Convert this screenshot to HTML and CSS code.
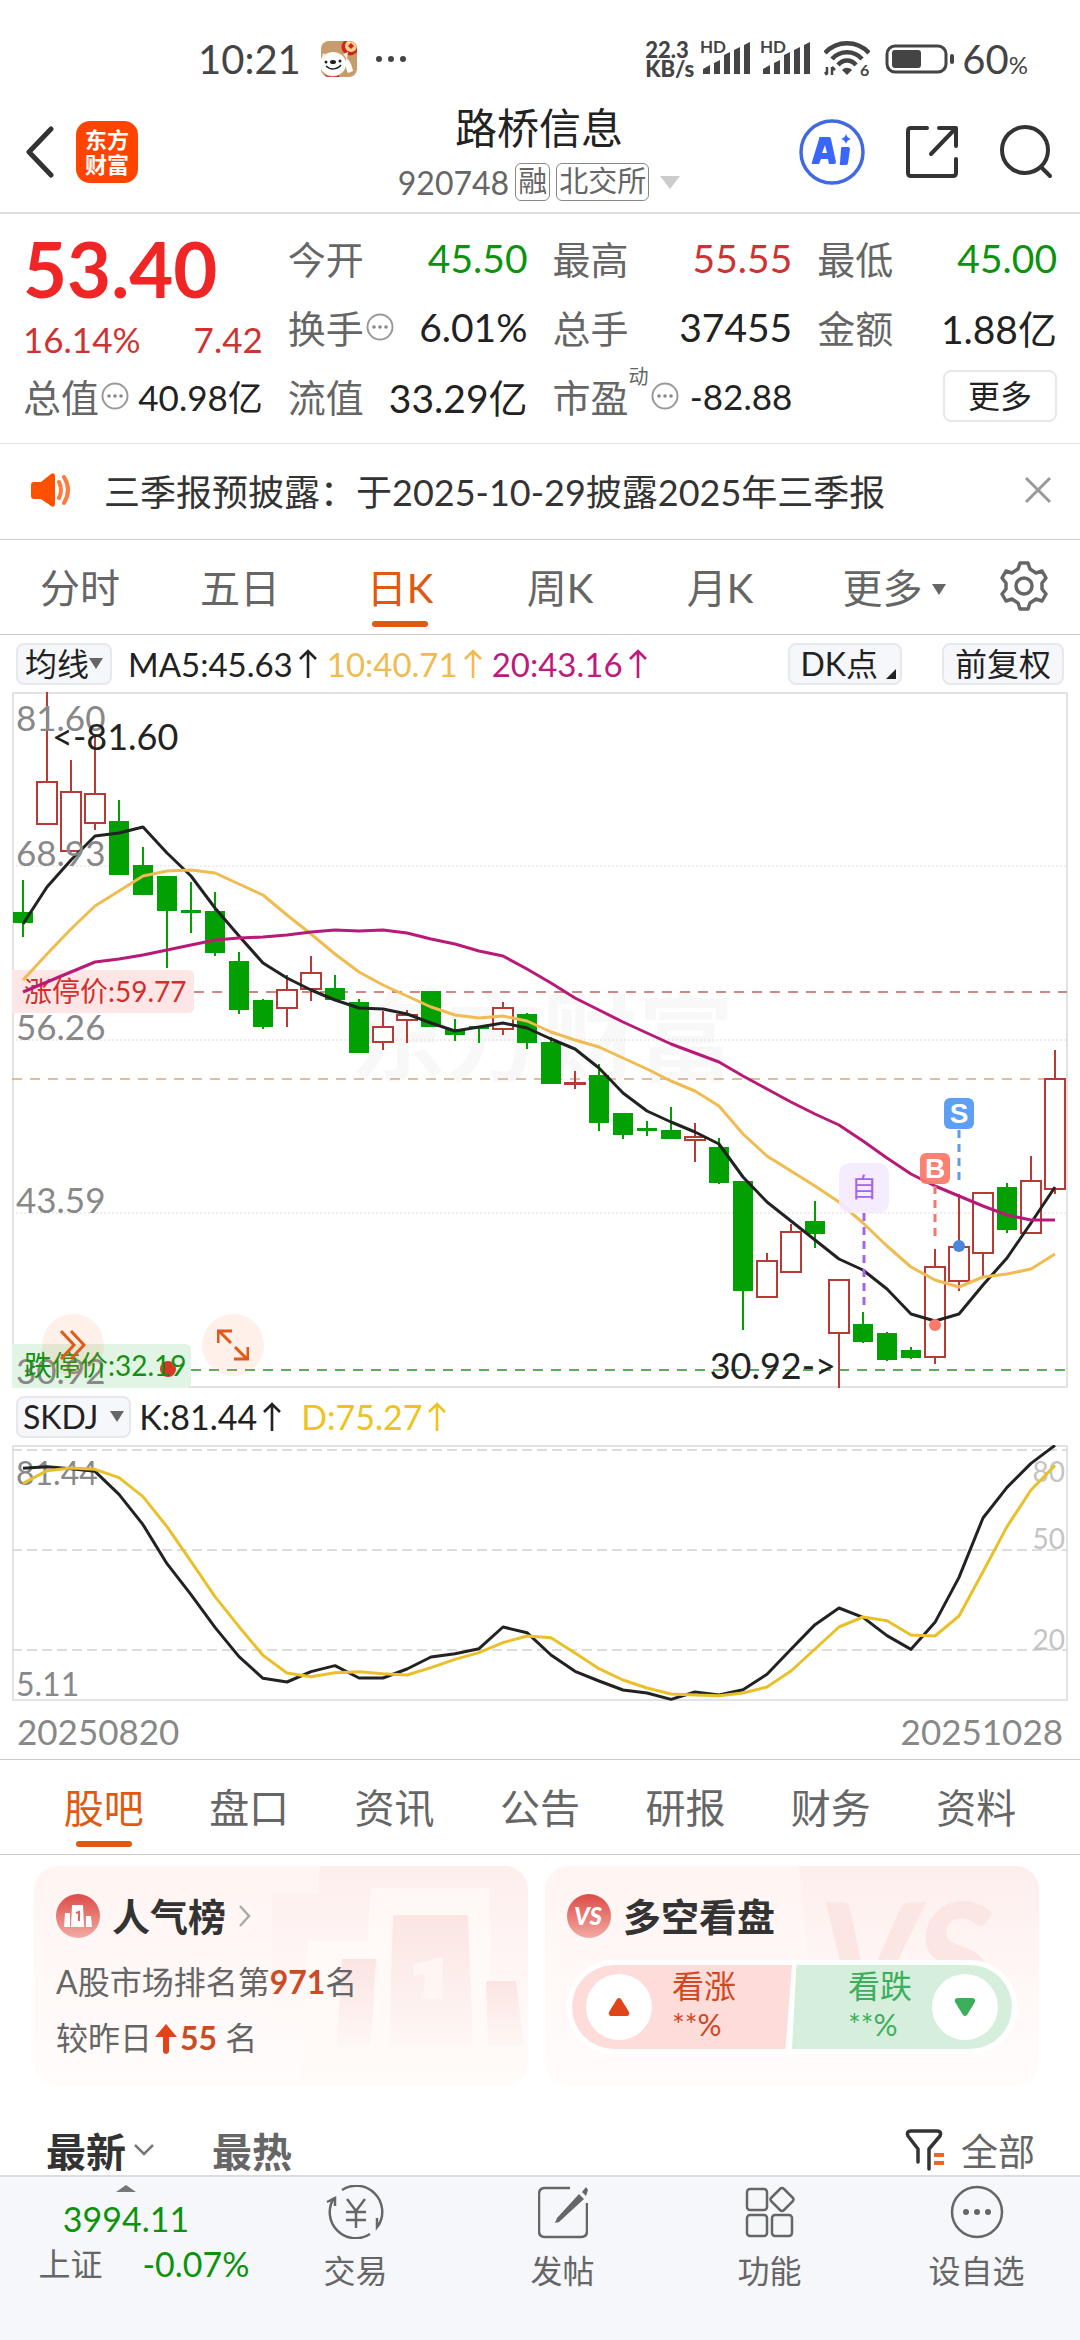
FILE: index.html
```html
<!DOCTYPE html>
<html lang="zh-CN">
<head>
  <meta charset="UTF-8">
  <meta name="viewport" content="width=device-width, initial-scale=1.0">
  <title>路桥信息 920748</title>
  <link rel="stylesheet" href="styles.css">
</head>
<body>
  <!-- Shared icons -->
  <svg class="sprite" aria-hidden="true">
    <symbol id="icon-info" viewBox="0 0 28 28">
      <circle cx="14" cy="14" r="12.5" fill="none" stroke="#999" stroke-width="2"/>
      <g fill="#888"><circle cx="8" cy="14" r="1.8"/><circle cx="14" cy="14" r="1.8"/><circle cx="20" cy="14" r="1.8"/></g>
    </symbol>
    <symbol id="icon-up" viewBox="0 0 18 30">
      <path d="M9 29V2M1 10l8-8 8 8" fill="none" stroke="currentColor" stroke-width="2.6"/>
    </symbol>
    <symbol id="icon-signal" viewBox="0 0 50 36">
      <text x="-1" y="12" class="hd">HD</text>
      <path d="M2 33v-5l7-4v9zM13 33v-11l6-3v14zM23 33V14l6-3v22zM33 33V9l6-3v27zM43 33V4l6-3v32z" fill="#444"/>
    </symbol>
  </svg>

  <div class="app">
    <!-- Status Bar -->
    <div class="status-bar">
      <div class="status-left">
        <span class="clock">10:21</span>
        <svg class="avatar" viewBox="0 0 36 36">
          <defs><clipPath id="avatar-clip"><rect width="36" height="36" rx="8"/></clipPath></defs>
          <g clip-path="url(#avatar-clip)">
            <rect width="36" height="36" fill="#c89b6c"/>
            <circle cx="29" cy="6" r="8.500" fill="#c9281f"/>
            <circle cx="30" cy="5" r="6" fill="#f6cf8a"/>
            <path d="M30 2l3 3-3 3-3-3z" fill="#c9281f"/>
            <ellipse cx="12" cy="23" rx="13" ry="12" fill="#fff"/>
            <path d="M25 17c4 2 6 8 7 13l-5 2c-2-4-3-8-2-15z" fill="#fff"/>
            <path d="M2 12l-2 8 5-6zM22 13l5-2-1 7z" fill="#f4ece2"/>
            <ellipse cx="12" cy="21" rx="3" ry="2" fill="#222"/>
            <circle cx="5" cy="21" r="1.500" fill="#222"/><circle cx="19" cy="20" r="1.500" fill="#222"/>
            <path d="M5 25c4 4 11 4 15-1" fill="none" stroke="#222" stroke-width="1.500"/>
            <path d="M4 34c5 2 10 2 14 0v3H4z" fill="#c9281f"/>
          </g>
        </svg>
        <svg class="dots" viewBox="0 0 32 8" fill="#444"><circle cx="4" cy="4" r="3"/><circle cx="16" cy="4" r="3"/><circle cx="28" cy="4" r="3"/></svg>
      </div>
      <div class="status-right">
        <div class="net-speed">22.3<br>KB/s</div>
        <svg class="signal"><use href="#icon-signal"/></svg>
        <svg class="signal"><use href="#icon-signal"/></svg>
        <svg class="wifi" viewBox="0 0 46 36">
          <g fill="none" stroke="#444" stroke-width="4.500">
            <path d="M1 12C13-1 33-1 45 12"/>
            <path d="M8 18c8-9 22-9 30 0"/>
            <path d="M14 24c5-6 13-6 18 0"/>
          </g>
          <path d="M18 29c3-3 7-3 10 0l-5 5z" fill="#444"/>
          <path d="M3 26v7M3 34l-2-3M8 34v-8M8 26l3 3" fill="none" stroke="#444" stroke-width="2.500"/>
          <text x="36" y="35" class="wifi-gen">6</text>
        </svg>
        <svg class="battery" viewBox="0 0 70 30">
          <rect x="2" y="2" width="59" height="26" rx="8" fill="none" stroke="#444" stroke-width="3"/>
          <rect x="7" y="6" width="29" height="18" rx="3" fill="#444"/>
          <rect x="65" y="10" width="4" height="10" rx="2" fill="#444"/>
        </svg>
        <span class="battery-level">60<small>%</small></span>
      </div>
    </div>

    <!-- Header -->
    <header class="header">
      <div class="header-left">
        <button class="icon-btn" aria-label="返回">
          <svg width="30" height="52" viewBox="0 0 30 52"><path d="M26 3L4 26l22 23" fill="none" stroke="#333" stroke-width="5" stroke-linecap="round" stroke-linejoin="round"/></svg>
        </button>
        <a class="logo" href="#">东方<br>财富</a>
      </div>
      <div class="header-title">
        <h1>路桥信息</h1>
        <div class="header-sub">
          <span>920748</span>
          <span class="tag">融</span>
          <span class="tag">北交所</span>
          <i class="caret caret-light"></i>
        </div>
      </div>
      <div class="header-right">
        <button class="icon-btn" aria-label="AI">
          <svg width="66" height="66" viewBox="0 0 66 66">
            <circle cx="33" cy="33" r="31" fill="none" stroke="#4169e1" stroke-width="3.500"/>
            <path fill="#3a66fb" fill-rule="evenodd" d="M21 18h9q2 0 2 2l5 23q0 2-2 2h-5l-1-5h-7l-2 5h-6q-2 0-1-2l7-23q0-2 1-2zM26 26l-3 8h5zM43 28h6q2 0 2 2l-2 14q0 2-2 2h-5q-2 0-1-2l1-14q0-2 1-2zM47 15q1 4 5 5-4 1-5 5-1-4-5-5 4-1 5-5z"/>
          </svg>
        </button>
        <button class="icon-btn" aria-label="分享">
          <svg width="52" height="52" viewBox="0 0 52 52"><path d="M21 2H5q-3 0-3 3v42q0 3 3 3h42q3 0 3-3V33M33 2h17v18M49 3L25 28" fill="none" stroke="#333" stroke-width="4" stroke-linecap="round" stroke-linejoin="round"/></svg>
        </button>
        <button class="icon-btn" aria-label="搜索">
          <svg width="54" height="54" viewBox="0 0 54 54"><g fill="none" stroke="#333" stroke-width="4" stroke-linecap="round"><circle cx="26" cy="25" r="23"/><path d="M42 42l9 9"/></g></svg>
        </button>
      </div>
    </header>

    <!-- Quote Summary -->
    <section class="quote">
      <div class="quote-main">
        <div class="price">53.40</div>
        <div class="change"><span>16.14%</span><span>7.42</span></div>
      </div>
      <div class="quote-item"><span class="name">今开</span><b class="down">45.50</b></div>
      <div class="quote-item"><span class="name">最高</span><b class="up">55.55</b></div>
      <div class="quote-item"><span class="name">最低</span><b class="down">45.00</b></div>
      <div class="quote-item"><span class="name">换手</span><svg class="info"><use href="#icon-info"/></svg><b>6.01%</b></div>
      <div class="quote-item"><span class="name">总手</span><b>37455</b></div>
      <div class="quote-item"><span class="name">金额</span><b>1.88亿</b></div>
      <div class="quote-item tight"><span class="name">总值</span><svg class="info"><use href="#icon-info"/></svg><b>40.98亿</b></div>
      <div class="quote-item"><span class="name">流值</span><b>33.29亿</b></div>
      <div class="quote-item tight"><span class="name name-sup">市盈<sup>动</sup></span><svg class="info"><use href="#icon-info"/></svg><b>-82.88</b></div>
      <div class="quote-item"><button class="more-btn">更多</button></div>
    </section>

    <!-- Notice -->
    <div class="notice">
      <svg width="42" height="36" viewBox="0 0 42 36">
        <path d="M3 10h7L20 2q4-2 4 2v28q0 4-4 2L10 27H3q-3 0-3-3V13q0-3 3-3z" fill="#ff5000"/>
        <path d="M28 10q4 8 0 16M33 5q8 13 0 26" fill="none" stroke="#ff7a3c" stroke-width="4" stroke-linecap="round"/>
      </svg>
      <a href="#">三季报预披露：于2025-10-29披露2025年三季报</a>
      <button class="icon-btn" aria-label="关闭">
        <svg width="28" height="28" viewBox="0 0 28 28"><path d="M2 2l24 24M26 2L2 26" stroke="#999" stroke-width="3"/></svg>
      </button>
    </div>

    <!-- Period Tabs -->
    <nav class="tabs period-tabs">
      <button>分时</button>
      <button>五日</button>
      <button class="active">日K</button>
      <button>周K</button>
      <button>月K</button>
      <button class="tab-more">更多<i class="caret caret-small"></i></button>
      <button class="gear" aria-label="设置">
        <svg width="48" height="50" viewBox="0 0 48 50"><g fill="none" stroke="#666" stroke-width="3.500" stroke-linejoin="round"><path d="M20 2h8l2 6 6 4 6-2 4 7-4 5v6l4 5-4 7-6-2-6 4-2 6h-8l-2-6-6-4-6 2-4-7 4-5v-6l-4-5 4-7 6 2 6-4z"/><circle cx="24" cy="25" r="8"/></g></svg>
      </button>
    </nav>

    <!-- K-line Chart -->
    <div class="toolbar">
      <button class="chip">均线<i class="caret caret-small"></i></button>
      <div class="legend">
        <span>MA5:45.63<svg class="arrow"><use href="#icon-up"/></svg></span>
        <span class="ma10">10:40.71<svg class="arrow"><use href="#icon-up"/></svg></span>
        <span class="ma20">20:43.16<svg class="arrow"><use href="#icon-up"/></svg></span>
      </div>
      <button class="chip chip-dk">DK点<i class="corner"></i></button>
      <button class="chip chip-right">前复权</button>
    </div>
    <div class="chart">
      <svg id="kline" viewBox="12 692 1056 696">
        <text x="350" y="1073" class="watermark">东方财富</text>
        <rect x="13" y="693" width="1054" height="694" class="chart-frame"/>
        <path d="M12 866H1067M12 1040H1067M12 1213H1067" class="grid-dotted"/>
        <path d="M12 970H188q6 0 6 6v31q0 6-6 6H12z" fill="#ffe6e6"/>
        <path d="M194 992H1067" class="limit limit-up"/>
        <path d="M12 1079H1067" class="limit limit-now"/>
        <path d="M12 1344H185q6 0 6 6v32q0 6-6 6H12z" fill="#e2f4e4"/>
        <text x="24" y="1002" class="limit-text up-text">涨停价:59.77</text>
        <g id="candles"></g>
        <g id="ma-lines" class="lines"></g>
        <g class="axis">
          <text x="16" y="731">81.60</text>
          <text x="16" y="866">68.93</text>
          <text x="16" y="1040">56.26</text>
          <text x="16" y="1213">43.59</text>
          <text x="16" y="1384">30.92</text>
        </g>
        <path d="M191 1370H1067" class="limit limit-down"/>
        <circle cx="168" cy="1369" r="8" fill="#d23a26"/>
        <text x="24" y="1376" class="limit-text down-text">跌停价:32.19</text>
        <text x="52" y="750" class="extreme">&lt;-81.60</text>
        <text x="836" y="1379" class="extreme" text-anchor="end">30.92-&gt;</text>
        <!-- Trade markers -->
        <path d="M864 1213V1311" class="marker-line" stroke="#a566e6"/>
        <rect x="839" y="1163" width="50" height="50" rx="10" fill="#f4eaff" fill-opacity="0.9"/>
        <text x="864" y="1197" class="marker-self">自</text>
        <path d="M935 1186V1238" class="marker-line" stroke="#f0786e"/>
        <rect x="920" y="1153" width="30" height="31" rx="6" fill="#fb7a6c" fill-opacity="0.95"/>
        <text x="935" y="1178" class="marker-text">B</text>
        <circle cx="935" cy="1325" r="6" fill="#fb7a6c"/>
        <path d="M959 1130V1182" class="marker-line" stroke="#5f9be8"/>
        <rect x="944" y="1098" width="30" height="31" rx="6" fill="#5c9ff5"/>
        <text x="959" y="1123" class="marker-text">S</text>
        <circle cx="959" cy="1246" r="6" fill="#4b86dc"/>
      </svg>
      <button class="float-btn float-next" aria-label="前进">
        <svg width="26" height="30" viewBox="0 0 26 30"><path d="M1 1l13 14L1 29M11 1l13 14-13 14" fill="none" stroke="#e2591a" stroke-width="3"/></svg>
      </button>
      <button class="float-btn float-full" aria-label="全屏">
        <svg width="32" height="32" viewBox="0 0 32 32"><path d="M1 14V2h14M2 2l12 12M31 18v12H17M30 30L18 18" fill="none" stroke="#e2591a" stroke-width="3"/></svg>
      </button>
    </div>

    <!-- SKDJ Chart -->
    <div class="toolbar">
      <button class="chip chip-skdj">SKDJ<i class="caret caret-small"></i></button>
      <div class="legend legend-skdj">
        <span>K:81.44<svg class="arrow"><use href="#icon-up"/></svg></span>
        <span class="d-line">D:75.27<svg class="arrow"><use href="#icon-up"/></svg></span>
      </div>
    </div>
    <div class="chart">
      <svg id="skdj" viewBox="12 65 1056 256">
        <rect x="13" y="66" width="1054" height="254" class="chart-frame"/>
        <path d="M12 70H1067M12 170H1067M12 270H1067" class="grid-dashed"/>
        <g class="axis-right">
          <text x="1065" y="102">80</text>
          <text x="1065" y="169">50</text>
          <text x="1065" y="270">20</text>
        </g>
        <g class="axis axis-sub">
          <text x="16" y="105">81.44</text>
          <text x="16" y="316">5.11</text>
        </g>
        <g id="skdj-lines" class="lines"></g>
      </svg>
    </div>
    <div class="dates"><span>20250820</span><span>20251028</span></div>

    <!-- Content Tabs -->
    <nav class="tabs content-tabs">
      <button class="active">股吧</button>
      <button>盘口</button>
      <button>资讯</button>
      <button>公告</button>
      <button>研报</button>
      <button>财务</button>
      <button>资料</button>
    </nav>

    <!-- Cards -->
    <section class="cards">
      <div class="card">
        <svg class="card-art" viewBox="0 0 256 220">
          <defs>
            <linearGradient id="art-back" x1="0" y1="0" x2="0" y2="1"><stop offset="0" stop-color="#fdeeec"/><stop offset="1" stop-color="#fffcfb" stop-opacity="0"/></linearGradient>
            <linearGradient id="art-front" x1="0" y1="0" x2="0" y2="1"><stop offset="0" stop-color="#fbe5e3"/><stop offset="1" stop-color="#fef7f5"/></linearGradient>
          </defs>
          <path d="M48 0H256V220H0V28H46z" fill="url(#art-back)"/>
          <path d="M99 22H218V114H240L256 180V220H28L36 75H95z" fill="#fffaf8" fill-opacity="0.8"/>
          <g fill="url(#art-front)">
            <path d="M70 93h34l-5 87H65z"/>
            <path d="M121 49h75l5 131h-84z"/>
            <path d="M214 115h30l8 65h-36z"/>
          </g>
          <path d="M141 98l30-7v42h-20l2-25-12 2z" fill="#fff5f3"/>
        </svg>
        <h2>
          <svg width="44" height="44" viewBox="0 0 44 44">
            <defs><linearGradient id="badge" x1="0" y1="0" x2="0" y2="1"><stop offset="0" stop-color="#dc4b46"/><stop offset="1" stop-color="#f3aaa4"/></linearGradient></defs>
            <circle cx="22" cy="22" r="22" fill="url(#badge)"/>
            <path d="M9 19h5v14H8zM16 11h11l1 22H15zM30 22h5l1 11h-6z" fill="#fff"/>
            <path d="M20 19l3-1v9" fill="none" stroke="#dc6660" stroke-width="2"/>
          </svg>
          <a href="#">人气榜</a>
          <svg width="13" height="22" viewBox="0 0 13 22"><path d="M2 1l9 10-9 10" fill="none" stroke="#aaa" stroke-width="2.500"/></svg>
        </h2>
        <p>A股市场排名第<strong>971</strong>名</p>
        <p>较昨日<svg class="rise" width="22" height="30" viewBox="0 0 22 30"><path d="M11 0l11 13h-8v15q-3 4-6 0V13H0z" fill="#e2441a"/></svg><strong>55</strong> 名</p>
      </div>
      <div class="card">
        <svg class="card-art" viewBox="0 0 256 220">
          <path d="M16 0H256V220H36z" fill="url(#art-back)"/>
          <text x="36" y="146" class="vs-art">VS</text>
        </svg>
        <h2>
          <svg width="44" height="44" viewBox="0 0 44 44"><circle cx="22" cy="22" r="22" fill="url(#badge)"/><text x="21" y="31" class="vs">VS</text></svg>
          多空看盘
        </h2>
        <div class="vote">
          <button class="vote-up">
            <span class="vote-dot"><svg width="22" height="18" viewBox="0 0 22 18"><path d="M9 1q2-2 4 0l8 13q1 4-3 4H4q-4 0-3-4z" fill="#e2441a"/></svg></span>
            <span class="vote-label">看涨<small>**%</small></span>
          </button>
          <button class="vote-down">
            <span class="vote-label">看跌<small>**%</small></span>
            <span class="vote-dot"><svg width="22" height="18" viewBox="0 0 22 18"><path d="M9 17q2 2 4 0l8-13q1-4-3-4H4q-4 0-3 4z" fill="#3daf5c"/></svg></span>
          </button>
        </div>
      </div>
    </section>

    <!-- Post Filter -->
    <div class="filter">
      <button class="sort active">最新<svg width="20" height="13" viewBox="0 0 20 13"><path d="M1 2l9 9 9-9" fill="none" stroke="#777" stroke-width="2.500"/></svg></button>
      <button class="sort">最热</button>
      <button class="filter-all">
        <svg width="42" height="42" viewBox="0 0 42 42"><path d="M13 33V20L3 7q-2-5 3-5h26q5 0 3 5L24 20v20" fill="none" stroke="#333" stroke-width="3.500" stroke-linecap="round"/><path d="M29 26h10M29 34h10" stroke="#f0641e" stroke-width="4"/></svg>
        全部
      </button>
    </div>

    <!-- Bottom Navigation Bar -->
    <nav class="bottom-bar">
      <a class="index" href="#">
        <i class="index-caret"></i>
        <span class="index-value">3994.11</span>
        <span class="index-row"><em>上证</em>-0.07%</span>
      </a>
      <a href="#">
        <svg width="60" height="54" viewBox="0 0 60 54"><g fill="none" stroke="#666" stroke-width="2.500"><path d="M16 5a26 26 0 0 1 36 36M54 38l-3 4v-9M44 49A26 26 0 0 1 8 13M1 17l8-4v8"/><path d="M21 14l9 12 9-12M30 26v17M20 27h20M20 35h20"/></g></svg>
        交易
      </a>
      <a href="#">
        <svg width="50" height="54" viewBox="0 0 50 54"><path d="M32 3H7Q1 3 1 9v37q0 6 6 6h36q6 0 6-6V18" fill="none" stroke="#666" stroke-width="2.500"/><path d="M41 9l5 5-25 23-4 1 2-5zM44 7l4-5 2 3-2 6z" fill="#666"/></svg>
        发帖
      </a>
      <a href="#">
        <svg width="50" height="54" viewBox="0 0 50 54"><g fill="none" stroke="#666" stroke-width="2.500"><rect x="2" y="4" width="20" height="21" rx="3"/><rect x="2" y="30" width="20" height="21" rx="3"/><rect x="27" y="30" width="20" height="21" rx="3"/><path d="M35 4q2-2 4 0l9 9q1 1 0 3l-9 9q-2 2-4 0l-9-9q-1-2 0-3z"/></g></svg>
        功能
      </a>
      <a href="#">
        <svg width="54" height="54" viewBox="0 0 54 54"><circle cx="27" cy="27" r="25" fill="none" stroke="#666" stroke-width="2.500"/><g fill="#666"><circle cx="16" cy="27" r="3"/><circle cx="27" cy="27" r="3"/><circle cx="38" cy="27" r="3"/></g></svg>
        设自选
      </a>
    </nav>
  </div>

  <script src="charts.js"></script>
</body>
</html>
```
FILE: styles.css
```css
/* Reset and Base Styles */
* {
  margin: 0;
  padding: 0;
  box-sizing: border-box;
}

body {
  background: #fff;
  color: #222;
  font-family: Lato, "Noto Sans CJK SC", sans-serif;
  font-size: 32px;
}

button {
  background: none;
  border: none;
  color: inherit;
  font: inherit;
  cursor: pointer;
}

a {
  color: inherit;
  text-decoration: none;
}

svg {
  display: block;
  flex: none;
}

.sprite {
  display: none;
}

.app {
  display: flex;
  flex-direction: column;
  min-height: 100vh;
}

.icon-btn {
  display: flex;
}

.caret {
  display: inline-block;
  border: 7px solid transparent;
  border-top: 11px solid #666;
  border-bottom: 0;
}

.caret-light {
  border-width: 13px 10px 0;
  border-top-color: #ccc;
}

/* Status Bar */
.status-bar {
  display: flex;
  justify-content: space-between;
  height: 92px;
  padding: 26px 52px 0 198px;
  color: #444;
}

.status-left,
.status-right {
  display: flex;
  align-items: center;
}

.clock {
  font-size: 40px;
}

.avatar {
  width: 36px;
  height: 36px;
  margin: 0 18px 0 20px;
}

.dots {
  width: 32px;
  height: 8px;
}

.net-speed {
  font-size: 22px;
  font-weight: 900;
  line-height: 19px;
  margin-right: 7px;
}

.signal {
  width: 50px;
  height: 36px;
  margin-right: 10px;
}

.hd {
  font-size: 17px;
  font-weight: bold;
  fill: #444;
}

.wifi {
  width: 46px;
  height: 36px;
  margin: 0 15px 0 3px;
}

.wifi-gen {
  font-size: 16px;
  font-weight: bold;
  fill: #444;
}

.battery {
  width: 70px;
  height: 30px;
  margin-right: 7px;
}

.battery-level {
  font-size: 40px;
}

.battery-level small {
  font-size: 24px;
}

/* Header */
.header {
  display: grid;
  grid-template-columns: 1fr auto 1fr;
  align-items: center;
  height: 122px;
  padding: 0 27px 0 25px;
  border-bottom: 2px solid #ddd;
}

.header-left,
.header-right {
  display: flex;
  align-items: center;
}

.header-left {
  gap: 21px;
}

.header-right {
  justify-content: flex-end;
  gap: 41px;
}

.logo {
  width: 62px;
  height: 62px;
  padding-top: 6px;
  border-radius: 14px;
  background: #ff4400;
  color: #fff;
  font-size: 22px;
  font-weight: bold;
  line-height: 25px;
  text-align: center;
}

.header-title h1 {
  font-size: 42px;
  font-weight: normal;
  line-height: 52px;
  margin-bottom: 8px;
  text-align: center;
}

.header-sub {
  display: flex;
  align-items: center;
  justify-content: center;
  gap: 6px;
  height: 40px;
  color: #666;
}

.tag {
  height: 38px;
  padding: 0 2px;
  border: 1px solid #888;
  border-radius: 6px;
  font-size: 29px;
  line-height: 34px;
}

.header-sub .caret {
  margin-left: 5px;
}

/* Quote Summary */
.quote {
  display: grid;
  grid-template-columns: repeat(4, 1fr);
  grid-auto-rows: 69px;
  column-gap: 25px;
  padding: 9px 23px 13px;
  border-bottom: 1px solid #e6e6e6;
}

.quote-main {
  grid-row: span 2;
  color: #cf3331;
}

.price {
  color: #f02626;
  font-size: 76px;
  font-weight: bold;
  line-height: 92px;
}

.change {
  display: flex;
  justify-content: space-between;
  font-size: 35px;
  line-height: 48px;
}

.quote-item {
  display: flex;
  align-items: center;
  color: #666;
  font-size: 38px;
  white-space: nowrap;
}

.name {
  position: relative;
}

.name-sup {
  margin-right: 20px;
}

.name sup {
  position: absolute;
  left: 100%;
  top: -2px;
  font-size: 20px;
  line-height: 20px;
}

.quote-item b {
  margin-left: auto;
  color: #222;
  font-size: 39px;
  font-weight: normal;
}

.quote-item .up {
  color: #cf3331;
}

.quote-item .down {
  color: #0c930c;
}

.info {
  width: 28px;
  height: 28px;
  margin-left: 2px;
}

.tight b {
  font-size: 35px;
}

.more-btn {
  width: 114px;
  height: 52px;
  margin-left: auto;
  border: 2px solid #e6e8ea;
  border-radius: 8px;
  color: #222;
  font-size: 32px;
  line-height: 44px;
}

/* Notice */
.notice {
  display: flex;
  align-items: center;
  height: 96px;
  padding: 0 28px 3px 31px;
  border-bottom: 1px solid #ccc;
  color: #333;
  font-size: 36px;
}

.notice a {
  flex: 1;
  margin-left: 31px;
}

/* Tabs */
.tabs {
  display: flex;
  height: 95px;
  border-bottom: 1px solid #ccc;
  color: #666;
  font-size: 40px;
}

.tabs button {
  flex: 1;
  position: relative;
  padding-bottom: 3px;
  white-space: nowrap;
}

.tabs .active {
  color: #df5a10;
}

.tabs .active::after {
  content: "";
  position: absolute;
  left: 50%;
  bottom: 7px;
  width: 56px;
  height: 6px;
  margin-left: -28px;
  border-radius: 3px;
  background: #df5a10;
}

.tabs .caret {
  margin-left: 9px;
  vertical-align: 8px;
}

.tabs .tab-more {
  padding-left: 14px;
}

.tabs .gear {
  display: flex;
  flex: 0 0 106px;
  align-items: center;
  padding-left: 26px;
}

.content-tabs {
  padding: 0 31px;
}

/* Chart Toolbar */
.toolbar {
  display: flex;
  align-items: center;
  height: 57px;
  padding: 0 16px;
}

.chip {
  display: flex;
  align-items: center;
  height: 42px;
  padding: 0 7px;
  border: 2px solid #e6e8ec;
  border-radius: 8px;
  background: #f6f7fa;
  font-size: 32px;
  line-height: 34px;
  white-space: nowrap;
}

.chip-dk {
  margin-left: auto;
  padding: 0 4px 0 10px;
}

.chip-right {
  margin: 0 0 0 40px;
  padding: 0 11px;
}

.chip-skdj {
  padding: 0 5px;
}

.chip-skdj .caret {
  margin-left: 12px;
}

.corner {
  align-self: flex-end;
  margin: 0 0 4px 8px;
  border: 5px solid #222;
  border-top-color: transparent;
  border-left-color: transparent;
}

.legend {
  display: flex;
  gap: 10px;
  margin-left: 16px;
  font-size: 33px;
}

.legend span {
  display: flex;
  align-items: center;
}

.legend-skdj {
  gap: 20px;
  margin-left: 8px;
  font-size: 34px;
}

.arrow {
  width: 18px;
  height: 30px;
  margin-left: 6px;
}

.ma10 {
  color: #f0bb50;
}

.ma20 {
  color: #c0187c;
}

.d-line {
  color: #efc31d;
}

/* Charts */
.chart {
  position: relative;
  padding: 0 12px;
}

.chart > svg {
  width: 100%;
  height: auto;
}

.chart-frame {
  fill: none;
  stroke: #e2e2e2;
  stroke-width: 2;
}

.grid-dotted {
  stroke: #ddd;
  stroke-width: 1;
  stroke-dasharray: 2 2;
}

.grid-dashed {
  stroke: #ddd;
  stroke-width: 2;
  stroke-dasharray: 10 5;
}

.watermark {
  fill: #f8f8f8;
  font-size: 96px;
  font-weight: bold;
}

.limit {
  stroke-width: 1.5;
  stroke-dasharray: 10 8;
}

.limit-up {
  stroke: #c4605c;
}

.limit-now {
  stroke: #d9a878;
}

.limit-down {
  stroke: #2f8f2f;
}

.limit-text {
  font-size: 28px;
}

.up-text {
  fill: #d22f2a;
}

.down-text {
  fill: #149014;
}

.candle-up {
  fill: #fff;
  stroke: #b83a36;
  stroke-width: 2;
}

.candle-down {
  fill: #03a003;
  stroke: #03a003;
  stroke-width: 2;
}

.lines polyline {
  fill: none;
  stroke-width: 3;
  stroke-linejoin: round;
}

.axis {
  fill: #888;
  font-size: 35px;
}

.axis-sub {
  font-size: 32px;
}

.axis-right {
  fill: #c4c4c4;
  font-size: 28px;
  text-anchor: end;
}

.extreme {
  fill: #222;
  font-size: 36px;
}

.marker-line {
  stroke-width: 3;
  stroke-dasharray: 8 6;
}

.marker-text {
  fill: #fff;
  font-family: "Liberation Sans", sans-serif;
  font-size: 28px;
  font-weight: bold;
  text-anchor: middle;
}

.marker-self {
  fill: #a566e6;
  font-size: 26px;
  text-anchor: middle;
}

.float-btn {
  display: flex;
  position: absolute;
  bottom: 12px;
  align-items: center;
  justify-content: center;
  width: 62px;
  height: 62px;
  border-radius: 50%;
  background: rgba(255, 130, 70, 0.12);
}

.float-next {
  left: 42px;
}

.float-full {
  left: 202px;
}

.dates {
  display: flex;
  justify-content: space-between;
  height: 59px;
  padding: 0 17px;
  border-bottom: 1px solid #ccc;
  color: #888;
  font-size: 35px;
  line-height: 60px;
}

/* Cards */
.cards {
  display: grid;
  grid-template-columns: 1fr 1fr;
  gap: 17px;
  padding: 11px 41px 0 34px;
}

.card {
  position: relative;
  height: 220px;
  padding: 22px;
  border-radius: 24px;
  background: linear-gradient(#fff5f3, #fffcfb);
  overflow: hidden;
}

.card-art {
  position: absolute;
  top: 0;
  right: 0;
  width: 256px;
  height: 220px;
}

.card h2 {
  display: flex;
  position: relative;
  align-items: center;
  gap: 12px;
  margin-bottom: 10px;
  color: #333;
  font-size: 38px;
  line-height: 56px;
}

.card p {
  position: relative;
  color: #666;
  line-height: 56px;
}

.card strong {
  color: #cd4a22;
}

.rise {
  display: inline-block;
  margin: 0 3px;
  vertical-align: -4px;
}

.vs {
  fill: #fff;
  font-size: 24px;
  font-style: italic;
  font-weight: 900;
  text-anchor: middle;
}

.vs-art {
  fill: #fbe6e4;
  font-size: 150px;
  font-style: italic;
  font-weight: 900;
}

.vote {
  display: flex;
  position: relative;
  height: 94px;
  margin-top: 16px;
  border: 5px solid #fff;
  border-radius: 47px;
  background: #fff;
  overflow: hidden;
}

.vote button {
  display: flex;
  flex: 1;
  align-items: center;
  font-size: 32px;
}

.vote-up {
  padding-left: 14px;
  background: #fddcd9;
  clip-path: polygon(0 0, 100% 0, 97% 100%, 0 100%);
  color: #d2481f;
}

.vote-down {
  justify-content: flex-end;
  padding-right: 14px;
  background: #d5efdc;
  clip-path: polygon(2% 0, 100% 0, 100% 100%, 0 100%);
  color: #3daf5c;
}

.vote-dot {
  display: flex;
  align-items: center;
  justify-content: center;
  width: 66px;
  height: 66px;
  border-radius: 50%;
  background: #fff;
}

.vote-label {
  margin: 0 20px 6px;
  line-height: 40px;
  text-align: left;
}

.vote-label small {
  display: block;
  font-size: 30px;
  line-height: 36px;
}

/* Post Filter */
.filter {
  display: flex;
  align-items: center;
  height: 89px;
  padding: 38px 45px 0 46px;
  color: #666;
  font-size: 40px;
}

.sort {
  display: flex;
  align-items: center;
  gap: 8px;
  margin-right: 58px;
  font-weight: bold;
}

.filter .active {
  color: #333;
}

.filter-all {
  display: flex;
  align-items: center;
  gap: 14px;
  margin-left: auto;
  font-size: 37px;
}

/* Bottom Navigation Bar */
.bottom-bar {
  display: flex;
  height: 165px;
  margin-top: auto;
  border-top: 2px solid #ddd;
  background: #f5f7fa;
  color: #666;
}

.bottom-bar a {
  display: flex;
  flex: 23;
  flex-direction: column;
  align-items: center;
  gap: 8px;
  padding-top: 8px;
  font-size: 32px;
  line-height: 48px;
}

.bottom-bar .index {
  flex: 28;
  gap: 0;
  color: #0c930c;
  font-size: 34px;
}

.index-caret {
  border: 10px solid transparent;
  border-top: 0;
  border-bottom: 7px solid #777;
}

.index-value {
  margin-top: 2px;
  line-height: 50px;
}

.index-row {
  display: flex;
  gap: 40px;
  padding-left: 36px;
  line-height: 40px;
}

.index-row em {
  color: #666;
  font-size: 32px;
  font-style: normal;
}
```
FILE: charts.js
```js
const STEP = 24;
const START = 23;
const SVG_NS = 'http://www.w3.org/2000/svg';

// [up, high, body top, body bottom, low]
const candles = [
  [0, 880, 913, 922, 937], [1, 692, 782, 824, 824], [1, 760, 792, 851, 851], [1, 737, 794, 823, 830],
  [0, 800, 822, 874, 875], [0, 847, 866, 894, 894], [0, 877, 877, 910, 968], [0, 882, 911, 912, 933],
  [0, 892, 912, 952, 956], [0, 952, 962, 1009, 1014], [0, 999, 1001, 1026, 1029], [1, 975, 990, 1008, 1027],
  [1, 956, 973, 989, 1001], [0, 975, 989, 999, 999], [0, 999, 1003, 1052, 1052], [1, 1011, 1027, 1042, 1050],
  [1, 1010, 1015, 1020, 1043], [0, 992, 992, 1026, 1026], [0, 1019, 1030, 1034, 1041], [0, 1027, 1027, 1028, 1043],
  [1, 1002, 1008, 1029, 1035], [0, 1013, 1015, 1042, 1049], [0, 1037, 1043, 1083, 1084], [1, 1071, 1083, 1084, 1089],
  [0, 1064, 1076, 1122, 1131], [0, 1114, 1114, 1134, 1139], [0, 1121, 1129, 1130, 1136], [0, 1107, 1131, 1138, 1139],
  [1, 1123, 1137, 1140, 1162], [0, 1138, 1148, 1182, 1184], [0, 1182, 1182, 1290, 1330], [1, 1253, 1261, 1297, 1297],
  [1, 1224, 1232, 1272, 1272], [0, 1201, 1222, 1233, 1248], [1, 1280, 1280, 1333, 1388], [0, 1312, 1325, 1341, 1343],
  [0, 1332, 1334, 1359, 1361], [0, 1347, 1351, 1357, 1359], [1, 1249, 1267, 1357, 1364], [1, 1194, 1247, 1281, 1291],
  [1, 1193, 1193, 1253, 1277], [0, 1183, 1188, 1229, 1233], [1, 1156, 1181, 1233, 1233], [1, 1050, 1079, 1189, 1194]
];

const ma5 = [924, 887, 860, 836, 833, 827, 853, 876, 908, 936, 963, 978, 990, 1000, 1008, 1009, 1014, 1023, 1031, 1027, 1023, 1028,
  1039, 1049, 1068, 1093, 1111, 1122, 1132, 1144, 1177, 1202, 1221, 1240, 1259, 1270, 1289, 1314, 1321, 1314, 1285, 1258, 1223, 1187];
const ma10 = [980, 954, 929, 906, 891, 876, 871, 870, 873, 884, 895, 915, 934, 954, 972, 985, 996, 1007, 1015, 1018, 1016, 1021,
  1032, 1040, 1047, 1058, 1069, 1081, 1091, 1106, 1134, 1156, 1171, 1186, 1202, 1223, 1246, 1267, 1280, 1287, 1277, 1274, 1269, 1254];
const ma20 = [992, 982, 972, 962, 959, 955, 950, 945, 940, 938, 937, 935, 932, 930, 931, 930, 933, 939, 944, 951, 956, 969,
  983, 998, 1010, 1022, 1033, 1044, 1053, 1062, 1076, 1089, 1102, 1114, 1125, 1141, 1158, 1174, 1186, 1196, 1206, 1215, 1220, 1220];

const kLine = [265, 260, 266, 274, 343, 434, 551, 644, 742, 830, 895, 906, 875, 857, 894, 894, 867, 831, 821, 806, 741, 758,
  825, 874, 903, 930, 939, 958, 936, 945, 929, 883, 808, 734, 684, 712, 767, 808, 727, 592, 414, 322, 250, 196];
const dLine = [310, 272, 264, 268, 293, 350, 440, 544, 650, 740, 826, 879, 890, 878, 875, 881, 885, 863, 838, 818, 788, 768,
  773, 819, 866, 900, 924, 942, 945, 947, 939, 921, 873, 807, 741, 711, 722, 765, 768, 708, 575, 440, 330, 256];

function add(parent, tag, attrs) {
  const el = document.createElementNS(SVG_NS, tag);
  for (const key in attrs) {
    el.setAttribute(key, attrs[key]);
  }
  parent.appendChild(el);
}

function drawLine(id, values, color, scale = 1) {
  const points = values.map((v, i) => `${START + i * STEP},${v / scale}`).join(' ');
  add(document.getElementById(id), 'polyline', { points: points, stroke: color });
}

const group = document.getElementById('candles');
candles.forEach(([up, high, top, bottom, low], i) => {
  const x = START + i * STEP;
  const name = up ? 'candle-up' : 'candle-down';
  const half = up ? 10 : 9;
  add(group, 'path', { d: `M${x} ${high}V${top}M${x} ${bottom}V${low}`, class: name });
  add(group, 'rect', { x: x - half, y: top, width: half * 2, height: bottom - top, class: name });
});

drawLine('ma-lines', ma5, '#222');
drawLine('ma-lines', ma10, '#f0bb50');
drawLine('ma-lines', ma20, '#b81a78');
drawLine('skdj-lines', kLine, '#222', 3);
drawLine('skdj-lines', dLine, '#eac02a', 3);
```
